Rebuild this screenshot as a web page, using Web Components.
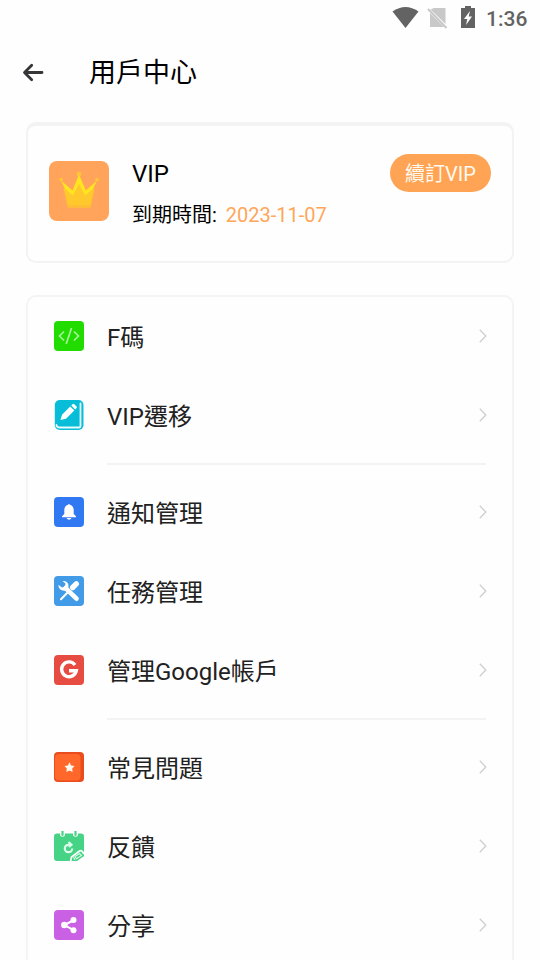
<!DOCTYPE html>
<html lang="zh-Hant">
<head>
<meta charset="utf-8">
<title>用戶中心</title>
<style>
html, body { margin: 0; height: 960px; overflow: hidden; background: #fefefe; }
body { font-family: Roboto, "Noto Sans CJK TC", sans-serif; color: #212121; }
</style>
</head>
<body>
<user-center></user-center>
<script>
const define = (name, html) => customElements.define(name, class extends HTMLElement {
  constructor() {
    super();
    this.attachShadow({ mode: 'open' }).innerHTML = html;
  }
});

define('status-bar', `
<style>
:host { display: flex; height: 36px; box-sizing: border-box; justify-content: flex-end; padding-right: 12px; color: #636363; }
svg { width: 92px; height: 36px; flex: none; margin-right: 4px; }
span { font-size: 21px; font-weight: 500; line-height: 38px; width: 42px; white-space: nowrap; }
</style>
<svg viewBox="390 0 92 36">
  <path fill="#636363" d="M392.500 11.500Q405.500 2.500 418.500 11.500L405.500 28Z"/>
  <path fill="#c8c8c8" d="M434 8H445.500V24L430.500 9.500ZM430 13L444 27H430Z"/>
  <path stroke="#c8c8c8" stroke-width="2" d="M428 9L446.500 28"/>
  <path fill="#636363" d="M465 6H471V8H475V28H461V8H465Z"/>
  <path fill="#fefefe" d="M470 11L464 19H467.300L466 25L472 16.500H468.700Z"/>
</svg>
<span>1:36</span>`);

define('title-bar', `
<style>
:host { display: flex; height: 86px; padding-left: 22px; }
svg { width: 22px; height: 20px; margin: 26px 45px 0 0; flex: none; }
h1 { margin: 0; font-size: 27px; font-weight: 400; line-height: 74px; color: #000; }
</style>
<svg viewBox="22 62 22 20" fill="none" stroke="#363538" stroke-width="2.800" stroke-linecap="round" stroke-linejoin="round"><path d="M42 72.500H25M31.700 65.300L24.500 72.500L31.700 79.700"/></svg>
<h1><slot></slot></h1>`);

define('pill-button', `
<style>
:host { display: flex; width: 101px; height: 38px; border-radius: 19px; background: #ffa454; justify-content: center; color: #fffaf0; font-size: 20px; line-height: 41px; white-space: nowrap; }
</style><slot></slot>`);

define('vip-card', `
<style>
:host { display: flex; box-sizing: border-box; width: 488px; height: 141px; margin: 0 26px; border: 2px solid #f3f3f3; border-top-width: 4px; border-radius: 10px; padding: 0 21px; }
.icon { width: 60px; height: 60px; margin: 35px 23px 0 0; flex: none; }
.info { flex: 1; color: #000; padding-top: 29px; }
.name { font-size: 24px; line-height: 38px; }
.date { display: flex; gap: 9px; font-size: 20px; line-height: 30px; margin-top: 7px; white-space: nowrap; }
.date b { font-weight: 400; color: #ffa65b; }
pill-button { margin-top: 28px; flex: none; }
</style>
<svg class="icon" viewBox="0 0 60 60">
  <rect width="60" height="60" rx="8" fill="#ffa45a"/>
  <path fill="#ffc92d" d="M14.500 27L24 34L30 22L36 34L45.500 27L41.500 46.500H19Z"/>
  <path fill="#ffbd35" d="M18.500 44H42L41.500 46.500H19Z"/>
  <path fill="#ffe51f" d="M12 19.500L23.500 29.500L30 13.500L36.800 29.500L48 19.500L44 28L36 34.500L30 23L24 34.500L16 28Z"/>
  <g fill="#ffc735"><circle cx="12" cy="18.500" r="1.800"/><circle cx="30" cy="13" r="2.300"/><circle cx="48" cy="18.500" r="1.800"/></g>
</svg>
<div class="info"><div class="name">VIP</div><div class="date"><span>到期時間:</span><b>2023-11-07</b></div></div>
<pill-button>續訂VIP</pill-button>`);

const icons = {
  code: `<rect width="30" height="30" rx="4" fill="#22dc00"/><path fill="none" stroke="#a6f598" stroke-width="1.700" d="M10 10.500L5.500 15L10 19.500M20 10.500L24.500 15L20 19.500M17.500 7L12.200 23"/>`,
  edit: `<rect x=".8" width="28.700" height="30" rx="5" fill="#08bdd8"/><path fill="none" stroke="#e8fcff" stroke-width="1.800" stroke-linecap="round" d="M26.500 3.500V26Q26.500 27.500 24.500 27.500H5.500Q2.500 27.500 2.500 25"/><path fill="#fff" d="M6.500 20L8 14.800L16.200 6.500L20.300 10.600L12 18.800ZM17.300 5.500L18.800 4Q19.500 3.500 20.300 4.200L22.600 6.500Q23.200 7.200 22.600 8L21.200 9.400Z"/>`,
  bell: `<rect width="30" height="30" rx="4" fill="#3079f2"/><path fill="#fff" d="M14 7.700Q15 6.500 16 7.700Q19.700 9 19.700 13V17L22 19.200V20.200H8V19.200L10.300 17V13Q10.300 9 14 7.700ZM12.500 21H17.500Q16.700 22.700 15 22.700Q13.300 22.700 12.500 21Z"/>`,
  tools: `<rect width="30" height="30" rx="4" fill="#429be7"/><g stroke="#fff" fill="none" stroke-linecap="round"><path stroke-width="4.600" d="M11.500 12L22.500 22.700"/><path stroke-width="2" d="M7 23.300L15 15"/><path stroke-width="5.400" d="M18.700 11.500L22.300 7.900"/></g><path fill="#fff" d="M8.500 5Q13.800 4.500 14.500 9.500L14 13.500L10.500 14.800Q4.500 14.500 4.300 8.700L8 11.500L11 10.500L11.500 7.500Z"/>`,
  google: `<rect width="30" height="30" rx="4" fill="#e64c41"/><path fill="none" stroke="#fff" stroke-width="3.400" d="M21 9.900A7.400 7.400 0 1 0 22.300 15.700H15"/>`,
  star: `<rect width="30" height="30" rx="4" fill="#e94c1d"/><rect x="1" y="2" width="25.500" height="26.500" rx="4" fill="#ff672b"/><path fill="#fff8ef" d="M15.500 10.300L17.100 13.400L20.500 14L18.200 16.500L18.600 20L15.500 18.500L12.400 20L12.800 16.500L10.500 14L13.900 13.400Z"/>`,
  note: `<rect y="2.500" width="30" height="27.500" rx="3" fill="#46d385"/><g fill="none" stroke="#fefefe" stroke-width="5" stroke-linecap="round"><path d="M8.500 0V3.200M21.500 0V3.200"/></g><g fill="none" stroke="#46d385" stroke-width="2.200" stroke-linecap="round"><path d="M8.500 0V4M21.500 0V4"/></g><path fill="none" stroke="#dcffe9" stroke-width="2.200" d="M17.500 13.800H14.500A3.700 3.700 0 1 0 18.200 17.500M14.500 11L17.500 13.800L15 16"/><path fill="none" stroke="#fefefe" stroke-width="1.700" d="M16.500 30.500L17.500 26L25.500 20Q27.300 19 28.500 20.800L30 23"/><path fill="#fefefe" d="M31 24.500V31H21.500L29 25.800Z"/><path fill="none" stroke="#d2ffe2" stroke-width="1.100" d="M21 25.500L25.500 22.500L27.500 24.500L22.500 27.800ZM19.500 26L21 29"/>`,
  share: `<rect width="30" height="30" rx="4" fill="#ca60e4"/><path fill="none" stroke="#fff" stroke-width="2" d="M20 10L10.500 15L20 20.300"/><g fill="#fff"><circle cx="10.300" cy="15" r="3.200"/><circle cx="19.500" cy="10" r="3"/><circle cx="19.500" cy="20.300" r="3"/></g>`
};

customElements.define('menu-row', class extends HTMLElement {
  connectedCallback() {
    if (this.shadowRoot) return;
    this.attachShadow({ mode: 'open' }).innerHTML = `
<style>
:host { display: flex; height: 79px; padding: 0 25px 0 26px; box-sizing: border-box; }
.icon { width: 30px; height: 30px; margin: 24px 23px 0 0; flex: none; }
span { flex: 1; font-size: 24px; line-height: 82px; white-space: nowrap; }
.arrow { width: 8px; height: 14px; margin-top: 32px; flex: none; }
</style>
<svg class="icon" viewBox="0 0 30 30">${icons[this.getAttribute('icon')]}</svg>
<span><slot></slot></span>
<svg class="arrow" viewBox="0 0 8 14" fill="none" stroke="#cecece" stroke-width="1.300"><path d="M.8 .8L6.800 7L.8 13.200"/></svg>`;
  }
});

define('menu-divider', `
<style>:host { display: block; height: 2px; margin: 8px 26px 8px 79px; background: #f3f3f3; }</style>`);

define('menu-card', `
<style>:host { display: block; box-sizing: border-box; width: 488px; height: 760px; margin: 32px 26px 0; border: 2px solid #f4f4f4; border-radius: 10px; }</style>
<slot></slot>`);

define('user-center', `
<style>:host { display: block; width: 540px; height: 960px; overflow: hidden; }</style>
<status-bar></status-bar>
<title-bar>用戶中心</title-bar>
<vip-card></vip-card>
<menu-card>
  <menu-row icon="code">F碼</menu-row>
  <menu-row icon="edit">VIP遷移</menu-row>
  <menu-divider></menu-divider>
  <menu-row icon="bell">通知管理</menu-row>
  <menu-row icon="tools">任務管理</menu-row>
  <menu-row icon="google">管理Google帳戶</menu-row>
  <menu-divider></menu-divider>
  <menu-row icon="star">常見問題</menu-row>
  <menu-row icon="note">反饋</menu-row>
  <menu-row icon="share">分享</menu-row>
</menu-card>`);
</script>
</body>
</html>
